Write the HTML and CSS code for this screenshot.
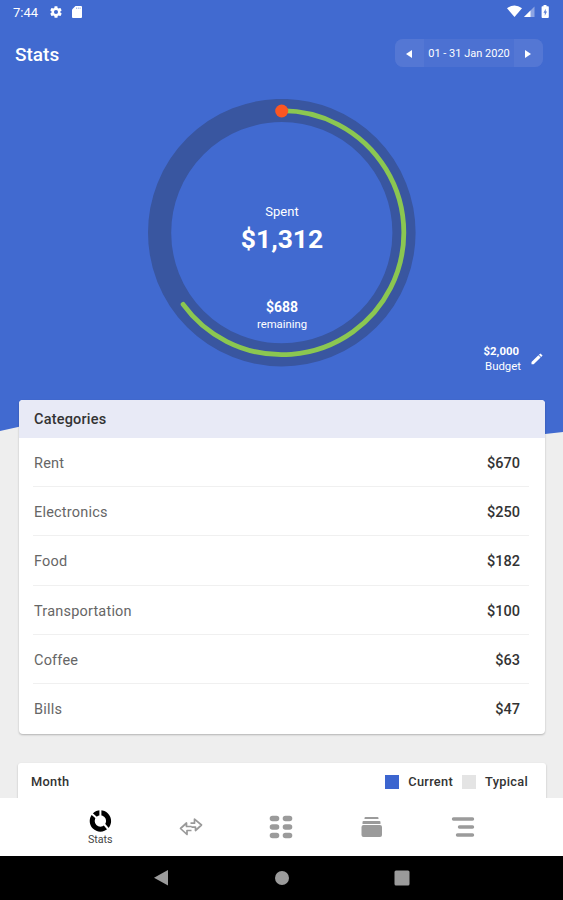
FILE: index.html
```html
<!DOCTYPE html>
<html lang="en">
<head>
<meta charset="UTF-8">
<meta name="viewport" content="width=device-width, initial-scale=1.0">
<title>Stats</title>
<link rel="stylesheet" href="styles.css">
</head>
<body>

<main class="screen">
  <!-- blue background with the wavy bottom edge -->
  <svg class="backdrop" viewBox="0 0 563 436">
    <path fill="#416ad0" d="M0 0H563V432L545 434Q400 444 282 424Q130 402 18 427L0 431Z"/>
  </svg>

  <!-- status bar -->
  <div class="status-bar">
    <span class="clock">7:44</span>
    <svg class="gear" width="14" height="14" viewBox="0 0 24 24">
      <path fill="#fff" d="M19.4 13c0-.3.1-.6.1-1s0-.7-.1-1l2.1-1.600c.2-.2.2-.4.1-.6l-2-3.500c-.1-.2-.4-.3-.6-.2l-2.500 1c-.5-.4-1.100-.7-1.700-1l-.4-2.600c0-.3-.2-.5-.4-.5h-4c-.3 0-.5.2-.5.4l-.4 2.700c-.6.300-1.200.6-1.700 1l-2.500-1c-.2-.1-.5 0-.6.2l-2 3.500c-.1.200-.1.500.1.600L4.500 11c0 .300-.1.600-.1 1s0 .7.1 1l-2.100 1.600c-.2.200-.3.400-.1.600l2 3.500c.1.200.4.300.6.2l2.500-1c.5.400 1.100.7 1.700 1l.4 2.600c0 .300.2.500.5.500h4c.3 0 .5-.2.5-.4l.4-2.700c.6-.3 1.200-.6 1.700-1l2.500 1c.2.1.5 0 .6-.2l2-3.500c.1-.2.1-.5-.1-.6zM12 15.500a3.500 3.500 0 1 1 0-7 3.500 3.500 0 0 1 0 7z"/>
    </svg>
    <svg class="sd" width="10" height="12" viewBox="0 0 10 12">
      <path fill="#fff" d="M3.500 0H9a1 1 0 0 1 1 1v10a1 1 0 0 1-1 1H1a1 1 0 0 1-1-1V3.500z"/>
      <path stroke="#a9bce9" d="M4.500 1.500v1.500M6.300 1.500v1.500M8.100 1.500v1.500"/>
    </svg>
    <svg class="signals" width="44" height="14" viewBox="0 0 44 14">
      <path fill="#fff" d="M0 3.300Q7.500-2.300 15 3.300L7.500 12z"/>
      <path fill="#fff" opacity=".4" d="M27.500 1.500V12H17z"/>
      <path fill="#fff" d="M23.500 5.500V12H17z"/>
      <path fill="#fff" d="M36.500 1.300V0h3v1.300H41a.8.8 0 0 1 .8.8V12a.9.900 0 0 1-.9.900H35.500a.9.900 0 0 1-.9-.9V2.100a.8.8 0 0 1 .8-.8z"/>
      <path fill="#5d7fd6" d="M38.700 3.800L36.500 7.800h1.300v3l2.200-4.300h-1.300z"/>
    </svg>
  </div>

  <header class="top">
    <h1>Stats</h1>
    <div class="period">
      <button class="arrow"><svg width="6" height="8" viewBox="0 0 6 8"><path fill="#fff" d="M6 0v8L0 4z"/></svg></button>
      <span class="range">01 - 31 Jan 2020</span>
      <button class="arrow"><svg width="6" height="8" viewBox="0 0 6 8"><path fill="#fff" d="M0 0v8l6-4z"/></svg></button>
    </div>
  </header>

  <!-- spent gauge -->
  <section class="gauge">
    <svg class="ring" width="268" height="268" viewBox="0 0 268 268">
      <circle cx="133.800" cy="133.700" r="122.200" fill="none" stroke="#3956a0" stroke-width="23.200"/>
      <path d="M134 11.700A122 122 0 1 1 35.100 205.400" fill="none" stroke="#8bc751" stroke-width="4.800" stroke-linecap="round"/>
      <circle cx="133.700" cy="12" r="6.500" fill="#fc5622"/>
    </svg>
    <div class="gauge-text">
      <span class="label">Spent</span>
      <strong class="spent">$1,312</strong>
      <strong class="left">$688</strong>
      <span class="remaining">remaining</span>
    </div>
  </section>

  <div class="budget">
    <div class="budget-text"><strong>$2,000</strong><span>Budget</span></div>
    <svg width="12" height="12" viewBox="0 0 12 12">
      <path fill="#fff" d="M.5 9L7.400 2.200l2.200 2.200L2.700 11.200H.5zM7.900 1.700L9.400.4l2.200 2.200-1.500 1.300z"/>
    </svg>
  </div>

  <section class="card categories">
    <h2>Categories</h2>
    <ul>
      <li><span>Rent</span><b>$670</b></li>
      <li><span>Electronics</span><b>$250</b></li>
      <li><span>Food</span><b>$182</b></li>
      <li><span>Transportation</span><b>$100</b></li>
      <li><span>Coffee</span><b>$63</b></li>
      <li><span>Bills</span><b>$47</b></li>
    </ul>
  </section>

  <section class="card month">
    <h3>Month</h3>
    <i class="swatch current"></i><span class="current-label">Current</span>
    <i class="swatch typical"></i><span>Typical</span>
  </section>
</main>

<!-- app tabs -->
<nav class="tabs">
  <a class="tab active">
    <svg width="24" height="24" viewBox="0 0 24 24">
      <circle cx="12.400" cy="12" r="8.200" fill="none" stroke="#000" stroke-width="5"/>
      <path stroke="#fff" stroke-width="2" d="M12.400 0v8M3 4l6 5.200M15.500 14.500l5.500 6.500"/>
    </svg>
    <span>Stats</span>
  </a>
  <a class="tab">
    <svg width="24" height="20" viewBox="0 0 24 20">
      <path fill="none" stroke="#999" stroke-width="1.700" stroke-linejoin="round" d="M11.500 6.200h4V2.200L22.500 8l-6 5.500V10.200h-4M12.500 13.500H8v4L1.500 11.500l6-5.500v3.500H12.500"/>
    </svg>
  </a>
  <a class="tab">
    <svg width="24" height="24" viewBox="0 0 24 24">
      <path stroke="#9b9b9b" stroke-width="5.600" stroke-linecap="round" d="M3.500 3.500h4M16.500 3.500h4M3.500 12h4M16.500 12h4M3.500 20.500h4M16.500 20.500h4"/>
    </svg>
  </a>
  <a class="tab">
    <svg width="22" height="22" viewBox="0 0 22 22">
      <path fill="#9b9b9b" d="M4.500 1h12a1 1 0 0 1 1 1v1h-14V2a1 1 0 0 1 1-1zM3 5h15.500a1 1 0 0 1 1 1v2h-18V6a1 1 0 0 1 1-1zM2.500 9h16.500a2 2 0 0 1 2 2v8a2 2 0 0 1-2 2H2.500a2 2 0 0 1-2-2v-8a2 2 0 0 1 2-2z"/>
    </svg>
  </a>
  <a class="tab">
    <svg width="24" height="22" viewBox="0 0 24 22">
      <path stroke="#9b9b9b" stroke-width="3.400" stroke-linecap="round" d="M2.500 3h19M8.500 11h13M6.500 19h15"/>
    </svg>
  </a>
</nav>

<!-- android buttons -->
<div class="system-bar">
  <svg width="16" height="18" viewBox="0 0 16 18"><path fill="#9b9b9b" d="M14 1v15.500L0 8.800z"/></svg>
  <svg width="16" height="18" viewBox="0 0 16 18"><circle cx="8" cy="9" r="7" fill="#9b9b9b"/></svg>
  <svg width="16" height="18" viewBox="0 0 16 18"><rect x=".5" y="1.500" width="15" height="15" rx="1.500" fill="#9b9b9b"/></svg>
</div>

</body>
</html>
```

FILE: styles.css
```css
* {
  box-sizing: border-box;
}

body {
  margin: 0;
  height: 900px;
  display: flex;
  flex-direction: column;
  overflow: hidden;
  font-family: Roboto, "Liberation Sans", sans-serif;
  background: #eeeeee;
}

h1, h2, h3, ul {
  margin: 0;
  padding: 0;
}

.screen {
  position: relative;
  flex: 1;
  min-height: 0;
  overflow: hidden;
  color: #fff;
}

.backdrop {
  position: absolute;
  top: 0;
  left: 0;
  width: 563px;
  height: 436px;
  z-index: -1;
}

/* status bar */
.status-bar {
  display: flex;
  align-items: center;
  height: 24px;
  padding: 0 12px 0 13px;
}

.clock {
  width: 36px;
  font-size: 13px;
}

.sd {
  margin-left: 9px;
}

.signals {
  margin-left: auto;
}

/* title and period picker */
.top {
  display: flex;
  justify-content: space-between;
  align-items: center;
  height: 28px;
  margin-top: 15px;
  padding: 0 20px 0 15px;
}

h1 {
  padding-top: 2px;
  font-size: 19px;
  font-weight: 500;
}

.period {
  display: flex;
  width: 148px;
  height: 28px;
  border-radius: 8px;
  overflow: hidden;
  background: #4c71d2;
}

.arrow {
  width: 29px;
  padding: 0 1px 0 0;
  border: 0;
  background: #5477d4;
}

.range {
  flex: 1;
  line-height: 29px;
  font-size: 11px;
  text-align: center;
  white-space: nowrap;
}

/* gauge */
.gauge {
  display: grid;
  width: 268px;
  height: 268px;
  margin: 32px 0 0 148px;
}

.ring,
.gauge-text {
  grid-area: 1 / 1;
}

.gauge-text {
  display: flex;
  flex-direction: column;
  align-items: center;
  padding-top: 104px;
}

.label {
  font-size: 13px;
  line-height: 17px;
}

.spent {
  margin-top: 3px;
  font-size: 26.5px;
  line-height: 32px;
}

.left {
  margin-top: 43px;
  font-size: 14px;
  line-height: 18px;
}

.remaining {
  font-size: 11.3px;
  line-height: 17px;
}

.budget {
  display: flex;
  justify-content: flex-end;
  align-items: center;
  gap: 10px;
  height: 32px;
  margin-top: -24px;
  padding-right: 20px;
}

.budget-text {
  display: flex;
  flex-direction: column;
  align-items: flex-end;
  font-size: 11.4px;
  line-height: 15.5px;
}

.budget-text strong {
  padding-right: 2px;
}

/* cards */
.card {
  background: #fff;
  color: #333;
  box-shadow: 0 1px 2px rgba(0, 0, 0, .25);
}

.categories {
  height: 334px;
  margin: 25px 18px 0 19px;
  border-radius: 4px;
  overflow: hidden;
}

h2 {
  height: 38px;
  padding-left: 15px;
  font-size: 14.5px;
  font-weight: 500;
  letter-spacing: .2px;
  line-height: 40px;
  background: #e8eaf6;
}

.categories ul {
  padding: 0 16px 0 14px;
  list-style: none;
}

.categories li {
  display: flex;
  justify-content: space-between;
  height: 49.2px;
  padding: 0 9px 0 1px;
  border-bottom: 1px solid #f0f0f0;
  font-size: 14.5px;
  line-height: 51px;
}

.categories li:last-child {
  border-bottom: 0;
}

.categories li span {
  color: #666;
  letter-spacing: .2px;
}

.categories li b {
  font-weight: 500;
}

.month {
  display: flex;
  align-items: center;
  height: 80px;
  margin: 29px 17px 0 18px;
  padding: 0 18px 43px 13px;
  border-radius: 3px;
  font-size: 12.8px;
  font-weight: 500;
  letter-spacing: .3px;
}

h3 {
  margin-right: auto;
  font-size: 12.8px;
  font-weight: 500;
}

.swatch {
  width: 14px;
  height: 14px;
  margin-right: 9px;
}

.current {
  background: #3c65cf;
}

.typical {
  background: #e4e4e4;
}

.current-label {
  margin-right: 9px;
}

/* bottom navigation */
.tabs {
  display: flex;
  height: 58px;
  padding: 0 55px;
  background: #fff;
}

.tab {
  display: flex;
  flex: 1;
  flex-direction: column;
  align-items: center;
  justify-content: center;
}

.active {
  padding-top: 2px;
}

.active span {
  font-size: 10.7px;
  line-height: 14px;
  color: #444;
}

.system-bar {
  display: flex;
  justify-content: center;
  align-items: center;
  gap: 104px;
  height: 44px;
  background: #000;
}
```
